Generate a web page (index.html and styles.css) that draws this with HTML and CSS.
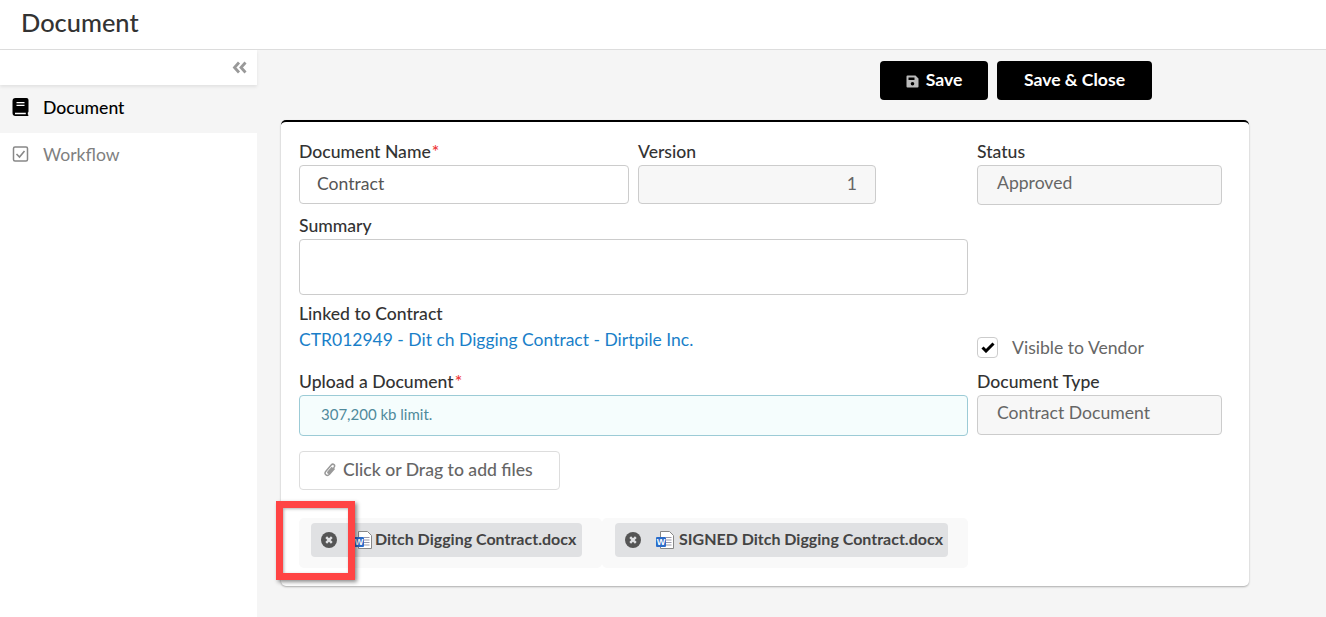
FILE: index.html
```html
<!DOCTYPE html>
<html lang="en">
<head>
    <meta charset="UTF-8">
    <meta name="viewport" content="width=device-width, initial-scale=1.0">
    <title>Document</title>
    <link rel="stylesheet" href="styles.css">
</head>
<body>
    <header class="page-header">Document</header>
    <div class="page-body">
        <nav class="sidebar">
            <div class="sidebar-toggle">
                <svg width="15" height="13" viewBox="0 0 15 13" fill="none" stroke="#999" stroke-width="2.800"><path d="M7 1.500 2.500 6.500 7 11.500M13.500 1.500 9 6.500l4.500 5"/></svg>
            </div>
            <a class="nav-item active">
                <svg class="nav-icon" width="16" height="18" viewBox="0 0 16 18"><path fill="#000" d="M3 0h11a2 2 0 0 1 2 2v11.500c0 .5-.3.9-.7 1.100v1.800c.4.2.7.5.7.9 0 .4-.3.7-.8.7H3a3 3 0 0 1-3-3V3a3 3 0 0 1 3-3z"/><path fill="#fff" d="M4 4h8v1.300H4zM4 6.800h8v1.300H4zM2.500 14.700h10.800v1.600H2.500z"/></svg>
                Document
            </a>
            <a class="nav-item">
                <svg class="nav-icon" width="16" height="16" viewBox="0 0 16 16" fill="none" stroke="#888"><rect x="1" y="1" width="14" height="14" rx="1.500" stroke-width="1.500"/><path d="M4 8l3 3 5-6" stroke-width="1.600"/></svg>
                Workflow
            </a>
        </nav>
        <main class="content">
            <div class="actions">
                <button class="btn btn-save">
                    <svg width="13" height="13" viewBox="0 0 13 13"><path fill="#bbb" d="M1.500 0.500h8l3 3v8a1 1 0 0 1-1 1h-10a1 1 0 0 1-1-1v-10a1 1 0 0 1 1-1z"/><path fill="#000" d="M2.500 2.500h6v2.500h-6z"/><circle cx="6.500" cy="8.800" r="1.800" fill="#000"/></svg>
                    Save
                </button>
                <button class="btn btn-close">Save &amp; Close</button>
            </div>
            <section class="card">
                <div class="form-grid">
                    <div class="col-left">
                        <div class="row-top">
                            <div class="field field-name">
                                <label>Document Name<span class="req">*</span></label>
                                <div class="input">Contract</div>
                            </div>
                            <div class="field field-version">
                                <label>Version</label>
                                <div class="input readonly number">1</div>
                            </div>
                        </div>
                        <div class="field field-summary">
                            <label>Summary</label>
                            <div class="textarea"></div>
                        </div>
                        <div class="field field-linked">
                            <label>Linked to Contract</label>
                            <a class="link">CTR012949 - Dit ch Digging Contract - Dirtpile Inc.</a>
                        </div>
                        <div class="field field-upload">
                            <label>Upload a Document<span class="req">*</span></label>
                            <div class="limit">307,200 kb limit.</div>
                        </div>
                        <button class="add-files">
                            <svg width="12" height="15" viewBox="0 0 12 15" fill="none" stroke="#999" stroke-width="1.500"><path d="M10.500 6.500 5.500 12.300c-1.200 1.300-2.800 1.300-3.700.5-1-.9-1-2.300.1-3.600L7.200 3c.9-1 2-1.100 2.800-.4.800.7.800 1.800 0 2.800L5.300 10.800c-.4.500-.9.500-1.200.2-.3-.3-.3-.8.100-1.200l4-4.600"/></svg>
                            Click or Drag to add files
                        </button>
                    </div>
                    <div class="col-right">
                        <div class="field">
                            <label>Status</label>
                            <div class="input readonly tall">Approved</div>
                        </div>
                        <div class="visible-row">
                            <span class="checkbox">
                                <svg width="14" height="11" viewBox="0 0 14 11" fill="none" stroke="#000" stroke-width="3"><path d="M1.500 5.500 5 9l7.500-7.500"/></svg>
                            </span>
                            Visible to Vendor
                        </div>
                        <div class="field">
                            <label>Document Type</label>
                            <div class="input readonly tall">Contract Document</div>
                        </div>
                    </div>
                </div>
                <div class="files">
                    <div class="file-slot slot-one">
                        <div class="chip chip-one">
                            <svg class="chip-x" width="16" height="16" viewBox="0 0 16 16"><circle cx="8" cy="8" r="8" fill="#555"/><path d="M5.200 5.200l5.600 5.600M10.800 5.200l-5.600 5.600" stroke="#e0e1e3" stroke-width="2.400"/></svg>
                            <svg class="word word-one" width="20" height="18" viewBox="0 0 20 18"><path fill="#fff" stroke="#888" d="M4.500.5h9l4 4v13h-13z"/><path stroke="#99a" d="M10 6.500h5.500M10 9h5.500M10 11.500h5.500M10 14h5.500"/><rect x="0" y="6" width="10" height="10" rx="1" fill="#2b6cc9"/><text x="5" y="14" class="word-letter">W</text></svg>
                            <span>Ditch Digging Contract.docx</span>
                        </div>
                    </div>
                    <div class="file-slot slot-two">
                        <div class="chip chip-two">
                            <svg class="chip-x" width="16" height="16" viewBox="0 0 16 16"><circle cx="8" cy="8" r="8" fill="#555"/><path d="M5.200 5.200l5.600 5.600M10.800 5.200l-5.600 5.600" stroke="#e0e1e3" stroke-width="2.400"/></svg>
                            <svg class="word word-two" width="20" height="18" viewBox="0 0 20 18"><path fill="#fff" stroke="#888" d="M4.500.5h9l4 4v13h-13z"/><path stroke="#99a" d="M10 6.500h5.500M10 9h5.500M10 11.500h5.500M10 14h5.500"/><rect x="0" y="6" width="10" height="10" rx="1" fill="#2b6cc9"/><text x="5" y="14" class="word-letter">W</text></svg>
                            <span>SIGNED Ditch Digging Contract.docx</span>
                        </div>
                    </div>
                </div>
            </section>
        </main>
    </div>
    <div class="highlight"></div>
</body>
</html>
```

FILE: styles.css
```css
html, body {
    height: 100%;
}
body {
    font-family: Lato, "Open Sans", sans-serif;
    margin: 0;
    background: #f5f5f5;
    color: #333;
    font-size: 17.6px;
    overflow: hidden;
}
.page-header {
    height: 49px;
    line-height: 44px;
    padding-left: 21px;
    font-size: 25.4px;
    font-weight: 500;
    color: #333;
    background: #fff;
    border-bottom: 1px solid #ddd;
}
.page-body {
    display: flex;
    height: 567px;
}
.sidebar {
    width: 257px;
    flex-shrink: 0;
    background: #fff;
}
.sidebar-toggle {
    height: 35px;
    display: flex;
    justify-content: flex-end;
    align-items: center;
    padding-right: 10px;
    box-shadow: 0 2px 3px rgba(0, 0, 0, 0.08);
    position: relative;
}
.nav-item {
    height: 44px;
    box-sizing: border-box;
    display: flex;
    align-items: center;
    padding: 0 0 2px 12px;
    font-size: 17.6px;
    color: #808080;
}
.nav-item.active {
    height: 48px;
    padding-bottom: 4px;
    background: #f5f5f5;
    color: #000;
    font-weight: 500;
}
.nav-icon {
    width: 17px;
    margin-right: 14px;
}
.content {
    flex: 1;
    padding: 11px 0 0 24px;
}
.actions {
    display: flex;
    gap: 9px;
    padding-left: 599px;
    margin-bottom: 20px;
}
.btn {
    height: 39px;
    border: none;
    border-radius: 4px;
    background: #000;
    color: #fff;
    font-family: inherit;
    font-size: 17.6px;
    font-weight: 700;
    padding: 0 0 3px;
}
.btn-save {
    width: 108px;
}
.btn-save svg {
    margin-right: 3px;
    vertical-align: -2px;
}
.btn-close {
    width: 155px;
}
.card {
    width: 968px;
    height: 466px;
    box-sizing: border-box;
    background: #fff;
    border-top: 2px solid #000;
    border-radius: 5px;
    box-shadow: 0 1px 2px rgba(0, 0, 0, 0.3);
    padding: 20px 18px 0;
}
.form-grid {
    display: flex;
    gap: 9px;
}
.col-left {
    width: 669px;
}
.col-right {
    width: 245px;
}
.row-top {
    display: flex;
    gap: 9px;
}
.field label {
    display: block;
    height: 23px;
    line-height: 19px;
    font-size: 17.6px;
    font-weight: 500;
    color: #333;
}
.req {
    color: #e33;
    margin-left: 1px;
}
.field-name {
    width: 330px;
}
.field-version {
    width: 238px;
}
.input {
    height: 39px;
    box-sizing: border-box;
    border: 1px solid #ccc;
    border-radius: 4px;
    padding: 0 18px 0 17px;
    line-height: 35px;
    font-size: 17.6px;
    color: #555;
}
.input.readonly {
    background: #f7f7f7;
    color: #666;
}
.input.tall {
    height: 40px;
    line-height: 34px;
    padding: 0 19px;
}
.input.number {
    text-align: right;
}
.field-summary {
    margin-top: 12px;
}
.textarea {
    height: 56px;
    box-sizing: border-box;
    border: 1px solid #ccc;
    border-radius: 4px;
}
.field-linked {
    margin-top: 9px;
    height: 58px;
}
.field-linked label {
    height: 25px;
}
.link {
    color: #1a7fc9;
    font-size: 17.5px;
}
.field-upload {
    margin-top: 10px;
}
.limit {
    height: 41px;
    box-sizing: border-box;
    background: #f5fdfd;
    border: 1px solid #9ccbd6;
    border-radius: 4px;
    padding-left: 21px;
    line-height: 36px;
    font-size: 15px;
    color: #4f8a9c;
}
.add-files {
    display: flex;
    align-items: center;
    gap: 7px;
    width: 261px;
    height: 39px;
    margin-top: 15px;
    padding: 0 0 3px 24px;
    background: #fff;
    border: 1px solid #ddd;
    border-radius: 4px;
    font-family: inherit;
    font-size: 17.6px;
    font-weight: 500;
    color: #666;
}
.visible-row {
    display: flex;
    align-items: center;
    gap: 14px;
    height: 20px;
    margin-top: 132px;
    margin-bottom: 15px;
    font-size: 17.6px;
    color: #666;
}
.checkbox {
    width: 19px;
    height: 19px;
    border: 1px solid #ccc;
    border-radius: 4px;
    display: flex;
    align-items: center;
    justify-content: center;
}
.files {
    display: flex;
    width: 669px;
    height: 50px;
    margin-top: 28px;
}
.file-slot {
    background: #f9f9f9;
    border-radius: 5px;
    padding: 5px 12px;
    box-sizing: border-box;
}
.slot-one {
    width: 303px;
}
.slot-two {
    width: 366px;
    padding-left: 13px;
}
.chip {
    display: flex;
    align-items: center;
    height: 34px;
    box-sizing: border-box;
    background: #e0e1e3;
    border-radius: 4px;
    padding: 0 0 3px 10px;
    font-size: 16px;
    font-weight: 700;
    color: #444;
    white-space: nowrap;
}
.chip svg {
    flex-shrink: 0;
    position: relative;
    top: 1px;
}
.chip-one {
    width: 271px;
}
.chip-two {
    width: 333px;
}
.word-one {
    margin-left: 17px;
    margin-right: 1px;
}
.word-two {
    margin-left: 15px;
    margin-right: 3px;
}
.word-letter {
    font-family: "Liberation Sans", sans-serif;
    font-size: 9px;
    font-weight: 700;
    fill: #fff;
    text-anchor: middle;
}
.highlight {
    position: absolute;
    left: 276px;
    top: 501px;
    width: 79px;
    height: 79px;
    box-sizing: border-box;
    border: 7px solid #f44;
    box-shadow: 2px 2px 4px rgba(0, 0, 0, 0.45), inset 1px 1px 3px rgba(0, 0, 0, 0.3);
}
```
